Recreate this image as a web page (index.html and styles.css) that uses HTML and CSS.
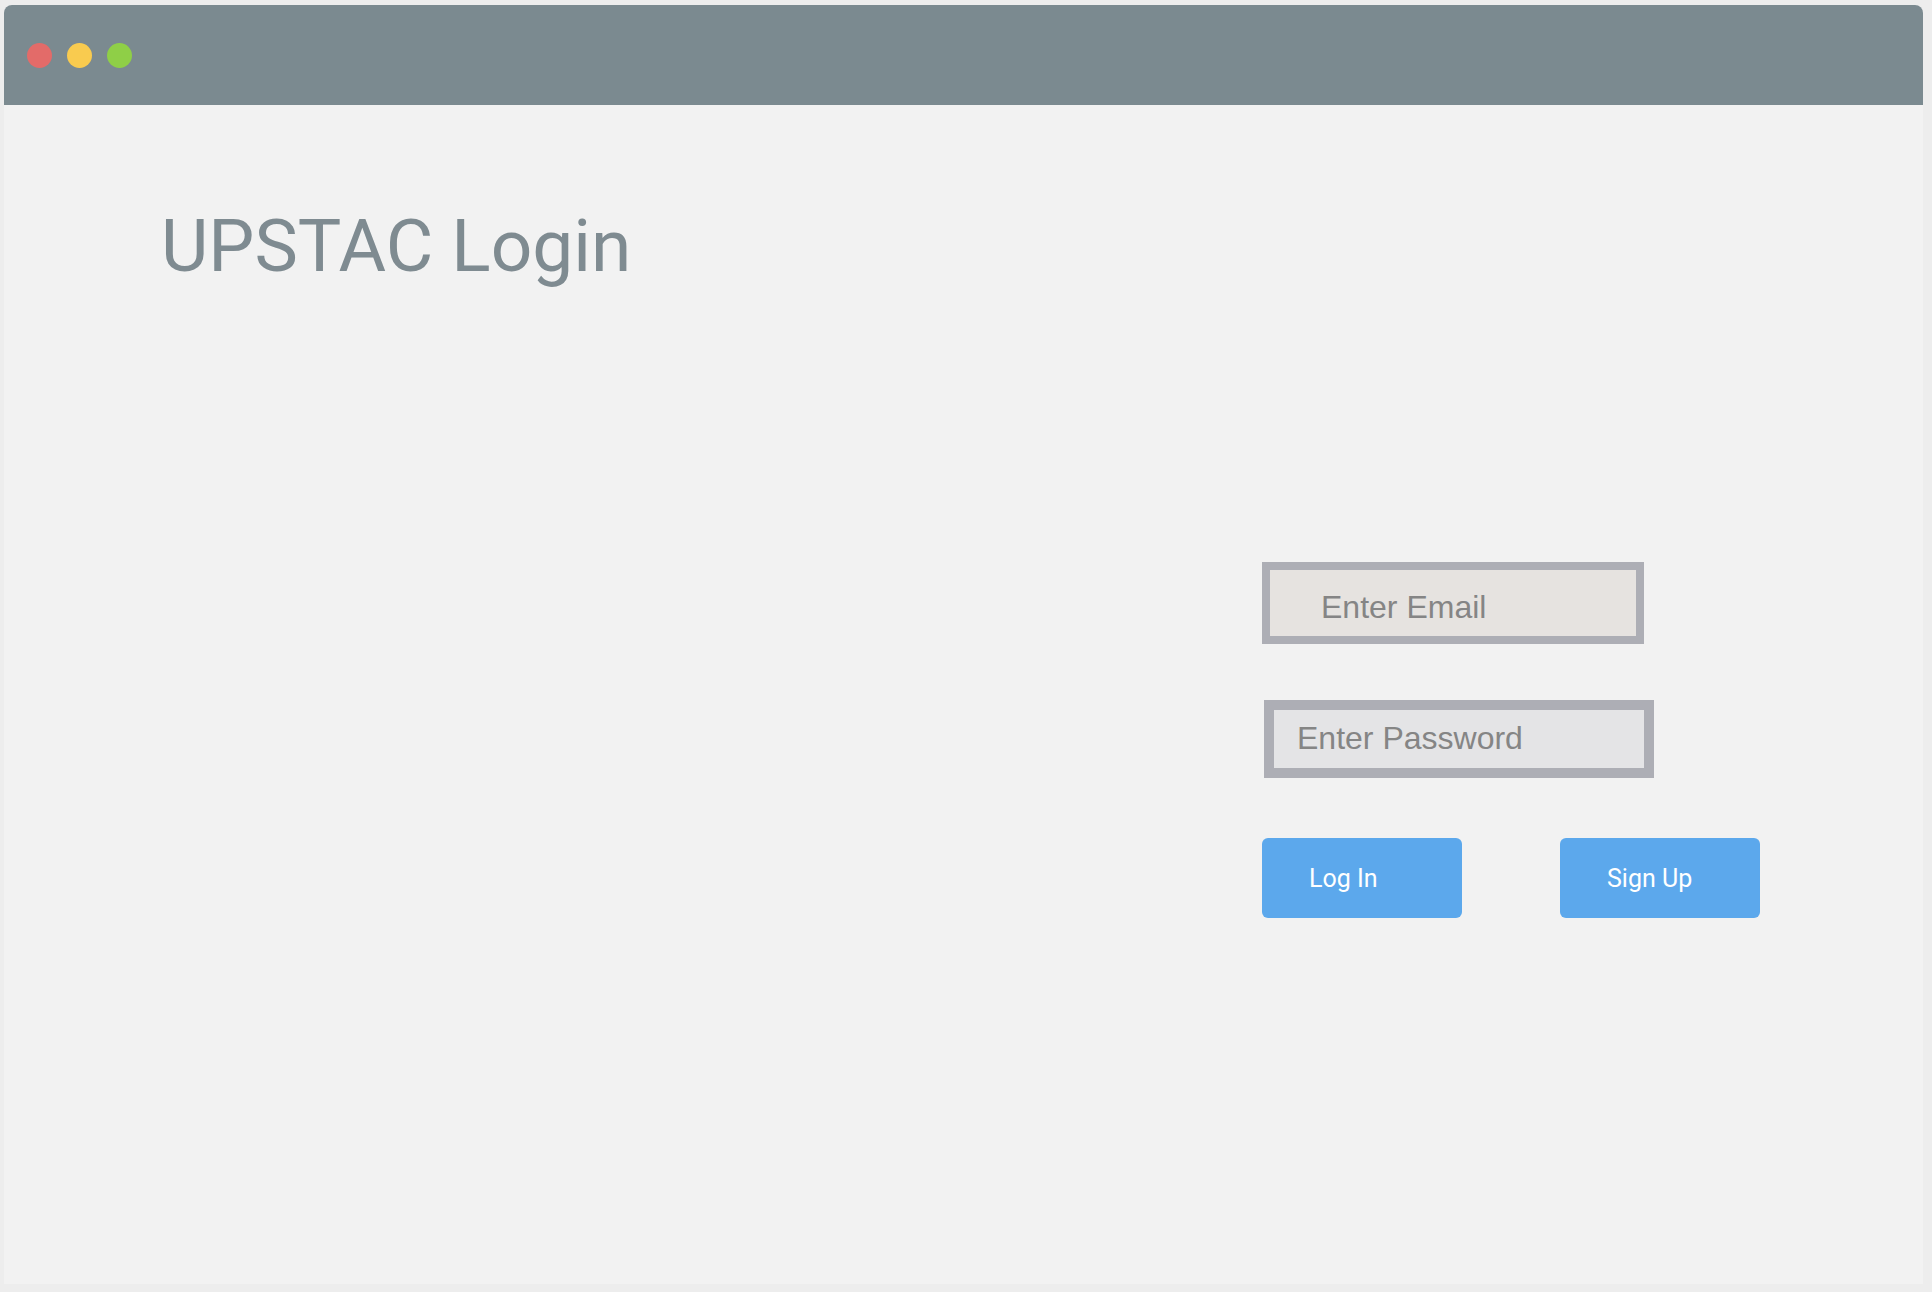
FILE: index.html
```html
<!DOCTYPE html>
<html lang="en">
<head>
<meta charset="utf-8">
<title>UPSTAC Login</title>
<link rel="stylesheet" href="styles.css">
</head>
<body>
<div class="window">
  <div class="titlebar">
    <span class="dot red"></span>
    <span class="dot yellow"></span>
    <span class="dot green"></span>
  </div>
  <div class="content">
    <h1 class="title">UPSTAC Login</h1>
    <form class="form">
      <div class="field email">Enter Email</div>
      <div class="field password">Enter Password</div>
      <div class="buttons">
        <button type="button" class="btn">Log In</button>
        <button type="button" class="btn">Sign Up</button>
      </div>
    </form>
  </div>
</div>
</body>
</html>
```
FILE: styles.css
```css
html, body {
  margin: 0;
  padding: 0;
  background: #ededed;
}
body {
  width: 1932px;
  height: 1292px;
  overflow: hidden;
}
.window {
  margin: 5px 9px 0 4px;
  width: 1919px;
  height: 1279px;
  background: #f2f2f2;
  border-radius: 8px 8px 0 0;
  overflow: hidden;
}
.titlebar {
  height: 100px;
  background: #7b8a90;
  display: flex;
  align-items: center;
  padding-left: 23px;
  gap: 15px;
  box-sizing: border-box;
}
.dot {
  width: 25px;
  height: 25px;
  border-radius: 50%;
  display: block;
}
.red { background: #e36b69; }
.yellow { background: #f9cb4f; }
.green { background: #8fcf47; }
.content {
  padding-top: 105px;
}
.title {
  margin: 0 0 0 157px;
  font-family: Roboto, "Liberation Sans", sans-serif;
  font-weight: 400;
  font-size: 73px;
  line-height: 73px;
  color: #7f8b91;
}
.form {
  margin: 279px 0 0 1257px;
  display: flex;
  flex-direction: column;
  align-items: flex-start;
}
.field {
  box-sizing: border-box;
  font-family: "Liberation Sans", Arial, sans-serif;
  font-size: 32px;
  line-height: 36px;
  color: #858585;
  border-style: solid;
  border-color: #adaeb5;
}
.email {
  margin-left: 1px;
  width: 382px;
  height: 82px;
  border-width: 8px;
  background: #e6e3e0;
  padding: 19px 0 0 51px;
}
.password {
  margin: 56px 0 0 3px;
  width: 390px;
  height: 78px;
  border-width: 10px;
  background: #e4e4e6;
  padding: 10px 0 0 23px;
}
.buttons {
  margin: 60px 0 0 1px;
  display: flex;
  gap: 98px;
}
.btn {
  width: 200px;
  height: 80px;
  border: 0;
  border-radius: 6px;
  background: #5ca8ec;
  color: #ffffff;
  font-family: Roboto, "Liberation Sans", sans-serif;
  font-size: 25px;
  text-align: left;
  padding: 0 0 0 47px;
  margin: 0;
  cursor: pointer;
}
```
